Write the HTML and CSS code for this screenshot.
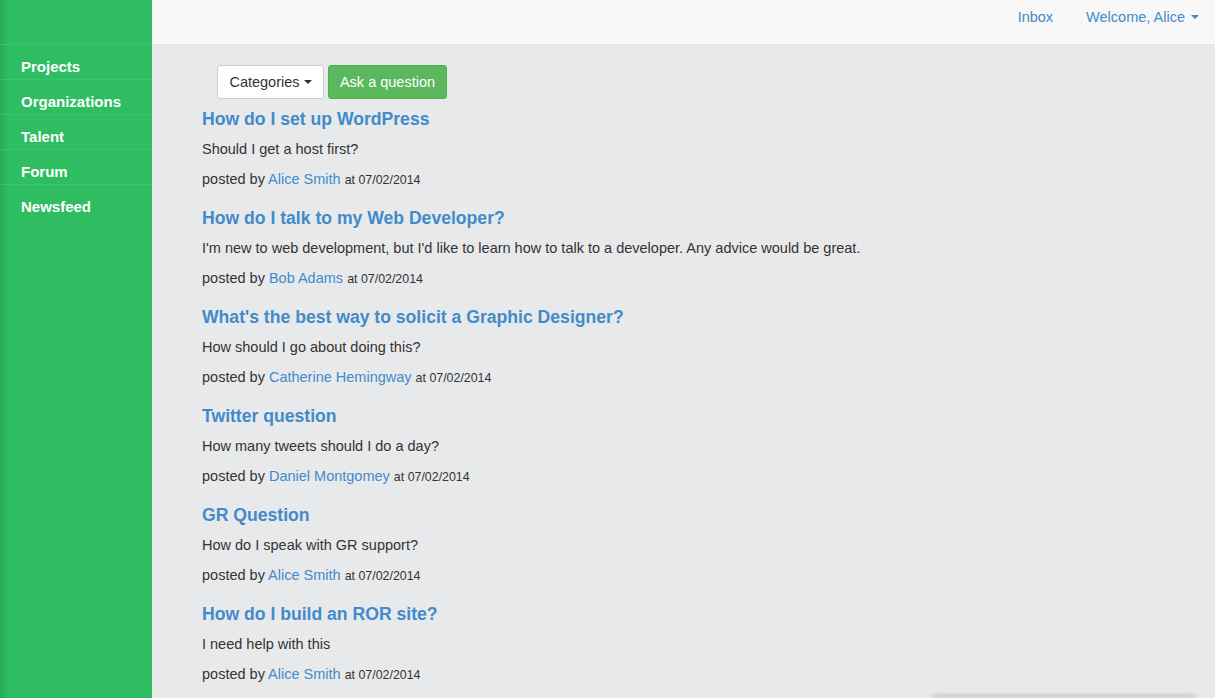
FILE: index.html
```html
<!DOCTYPE html>
<html>
<head>
<meta charset="utf-8">
<link rel="stylesheet" href="styles.css">
</head>
<body>
<div class="app">
  <aside class="sidebar">
    <nav class="side-nav">
      <a href="#">Projects</a>
      <a href="#">Organizations</a>
      <a href="#">Talent</a>
      <a href="#">Forum</a>
      <a href="#">Newsfeed</a>
    </nav>
  </aside>
  <div class="main">
    <header class="topbar">
      <a href="#" class="top-link">Inbox</a>
      <a href="#" class="top-link">Welcome, Alice <span class="caret"></span></a>
    </header>
    <section class="content">
      <div class="actions">
        <button class="btn btn-default">Categories <span class="caret dark"></span></button>
        <button class="btn btn-success">Ask a question</button>
      </div>
      <div class="question">
        <h3><a href="#">How do I set up WordPress</a></h3>
        <p>Should I get a host first?</p>
        <p class="meta">posted by <a href="#">Alice Smith</a> <small>at 07/02/2014</small></p>
      </div>
      <div class="question">
        <h3><a href="#">How do I talk to my Web Developer?</a></h3>
        <p>I'm new to web development, but I'd like to learn how to talk to a developer. Any advice would be great.</p>
        <p class="meta">posted by <a href="#">Bob Adams</a> <small>at 07/02/2014</small></p>
      </div>
      <div class="question">
        <h3><a href="#">What's the best way to solicit a Graphic Designer?</a></h3>
        <p>How should I go about doing this?</p>
        <p class="meta">posted by <a href="#">Catherine Hemingway</a> <small>at 07/02/2014</small></p>
      </div>
      <div class="question">
        <h3><a href="#">Twitter question</a></h3>
        <p>How many tweets should I do a day?</p>
        <p class="meta">posted by <a href="#">Daniel Montgomey</a> <small>at 07/02/2014</small></p>
      </div>
      <div class="question">
        <h3><a href="#">GR Question</a></h3>
        <p>How do I speak with GR support?</p>
        <p class="meta">posted by <a href="#">Alice Smith</a> <small>at 07/02/2014</small></p>
      </div>
      <div class="question">
        <h3><a href="#">How do I build an ROR site?</a></h3>
        <p>I need help with this</p>
        <p class="meta">posted by <a href="#">Alice Smith</a> <small>at 07/02/2014</small></p>
      </div>
    </section>
  </div>
</div>
<div class="dock"></div>
</body>
</html>
```
FILE: styles.css
```css
* { box-sizing: border-box; }
html, body { margin: 0; padding: 0; height: 100%; overflow: hidden; }
body {
  font-family: "Liberation Sans", Arial, sans-serif;
  font-size: 14.5px;
  color: #333;
  background: #e8e9eb;
}
a { color: #428bca; text-decoration: none; }
.app { display: flex; height: 698px; }
.sidebar {
  width: 152px;
  flex: 0 0 152px;
  background: #2ebd61;
  box-shadow: inset 7px 0 6px -4px rgba(0,0,0,0.12);
  padding-top: 44px;
}
.side-nav { display: flex; flex-direction: column; }
.side-nav a {
  display: block;
  height: 35px;
  line-height: 20px;
  padding-top: 12px;
  border-top: 1px solid #35c46f;
  padding-left: 21px;
  color: #fff;
  font-weight: bold;
  font-size: 15px;
}
.main { flex: 1; display: flex; flex-direction: column; min-width: 0; }
.topbar {
  flex: 0 0 45px;
  height: 45px;
  background: #f8f8f8;
  border-bottom: 1px solid #e3e3e3;
  display: flex;
  justify-content: flex-end;
  align-items: flex-start;
  padding-right: 16px;
  gap: 33px;
}
.top-link { line-height: 34px; font-size: 14.5px; color: #428bca; }
.caret {
  display: inline-block;
  width: 0; height: 0;
  border-top: 4px solid #428bca;
  border-left: 4px solid transparent;
  border-right: 4px solid transparent;
  vertical-align: middle;
  margin-left: 2px;
  margin-top: -2px;
}
.caret.dark { border-top-color: #333; margin-left: 0; }
.content { padding: 20px 0 0 50px; }
.actions { display: flex; gap: 4px; margin-left: 15px; margin-bottom: 10px; }
.btn {
  font-family: "Liberation Sans", Arial, sans-serif;
  font-size: 14.5px;
  height: 34px;
  padding: 0 10px;
  border-radius: 3px;
  border: 1px solid #ccc;
  cursor: pointer;
}
.btn-default { background: #fff; color: #333; width: 107px; }
.btn-success { background: #5cb85c; border-color: #4cae4c; color: #fff; width: 119px; }
.question h3 {
  margin: 0;
  font-size: 17.6px;
  line-height: 20px;
  font-weight: bold;
}
.question p { margin: 10px 0 0; line-height: 20px; }
.question p.meta { margin-bottom: 19px; }
.question:first-child + .question, .question { }
.question + .question h3 { margin-top: -1px; }
.meta small { font-size: 12.4px; }
.dock {
  position: fixed;
  left: 933px;
  width: 262px;
  bottom: -4px;
  height: 6px;
  background: #d8d8d8;
  box-shadow: 0 -1px 4px rgba(0,0,0,0.18);
}
```
